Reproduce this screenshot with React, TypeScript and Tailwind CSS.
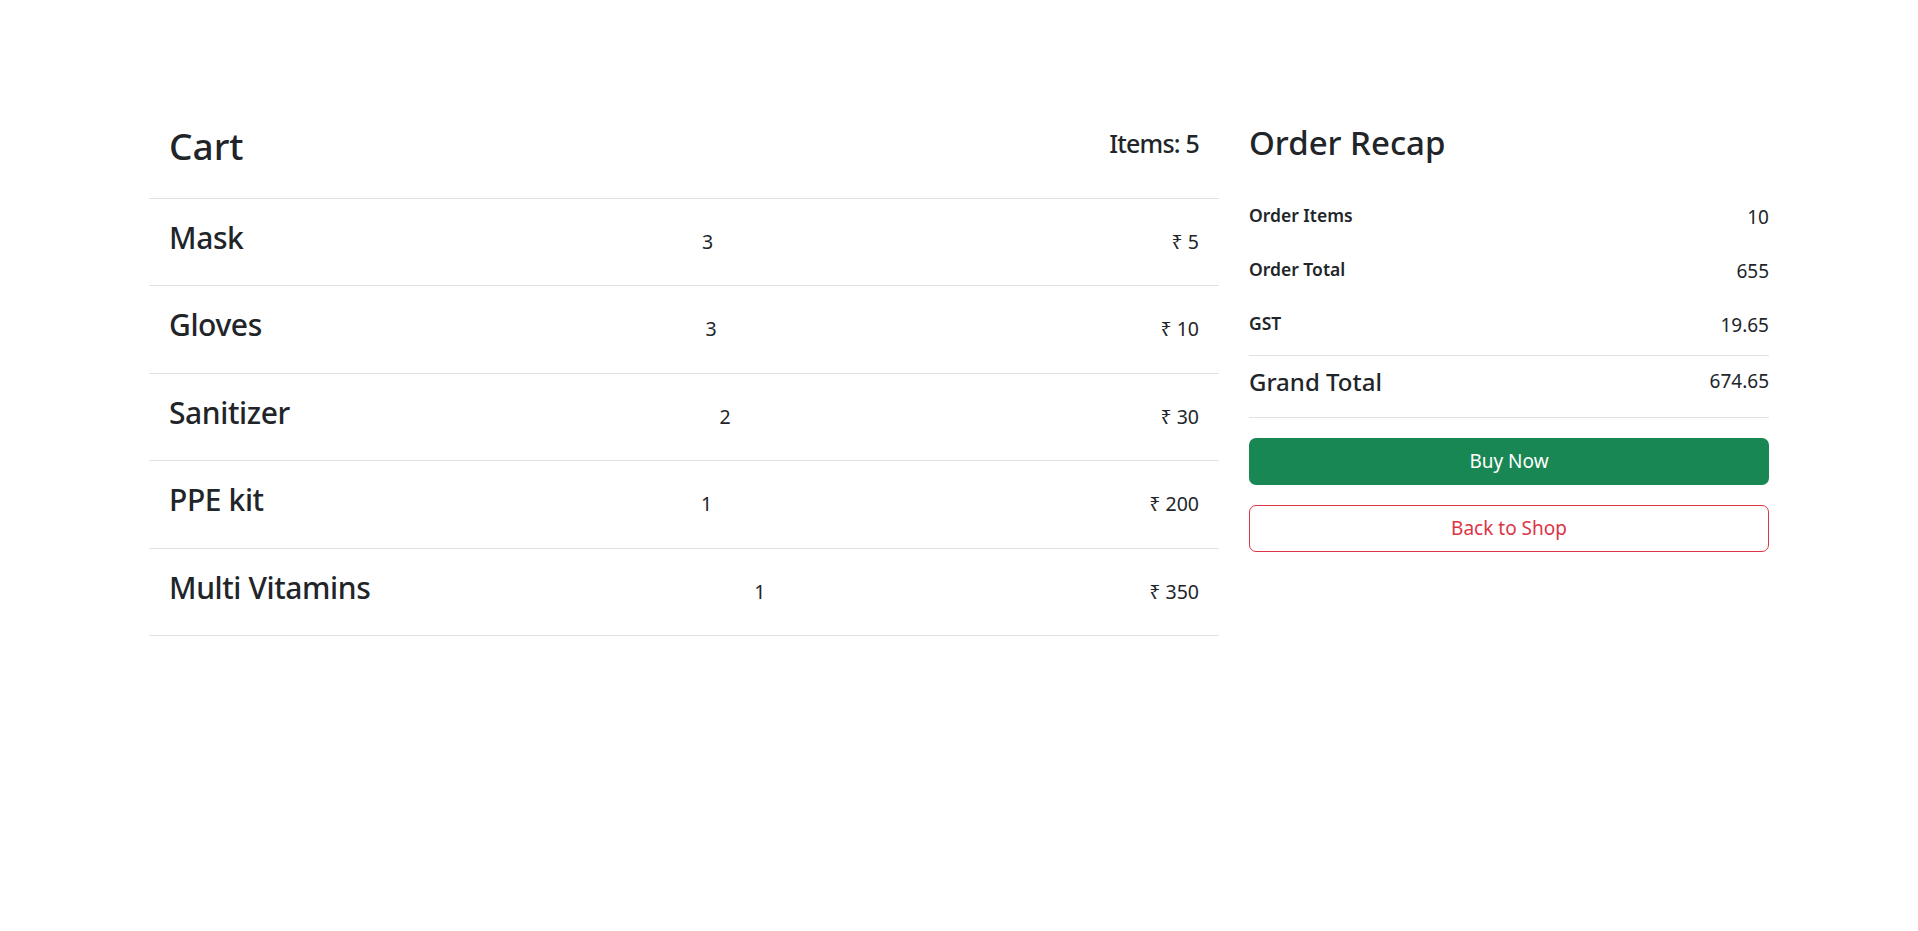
import React from "react";

type Item = {
  name: string;
  qty: number;
  price: number;
};

const items: Item[] = [
  { name: "Mask", qty: 3, price: 5 },
  { name: "Gloves", qty: 3, price: 10 },
  { name: "Sanitizer", qty: 2, price: 30 },
  { name: "PPE kit", qty: 1, price: 200 },
  { name: "Multi Vitamins", qty: 1, price: 350 },
];

const recap = [
  { label: "Order Items", value: "10" },
  { label: "Order Total", value: "655" },
  { label: "GST", value: "19.65" },
];

const CartRow: React.FC<{ item: Item }> = ({ item }) => (
  <div className="flex h-[87.4px] items-baseline justify-between border-b border-[#dee2e6] px-5 pt-[24px]">
    <h3 className="text-[30px] font-medium leading-none tracking-[-0.4px]">{item.name}</h3>
    <span className="text-[19.5px] leading-none">{item.qty}</span>
    <span className="text-[19.5px] leading-none">₹ {item.price}</span>
  </div>
);

export default function App() {
  return (
    <div className="min-h-screen bg-white font-['Noto_Sans','Open_Sans',sans-serif] text-[#212529]">
      <div className="mx-auto flex w-[1620px] items-start gap-[30px] pt-[100px]">
        {/* cart list */}
        <div className="w-[1070px]">
          <div className="flex h-[99px] items-start justify-between border-b border-[#dee2e6] px-5">
            <h1 className="mt-[27px] text-[37px] font-medium leading-none">Cart</h1>
            <h5 className="mt-[31px] text-[25px] font-medium leading-none tracking-[-0.8px]">Items: 5</h5>
          </div>
          {items.map((item) => (
            <CartRow key={item.name} item={item} />
          ))}
        </div>

        {/* order recap */}
        <div className="w-[520px]">
          <h2 className="mt-[26px] text-[33px] font-medium leading-none">Order Recap</h2>
          <div className="mt-[48px] flex flex-col gap-[35px]">
            {recap.map((r) => (
              <div key={r.label} className="flex h-[19px] items-start justify-between">
                <span className="text-[17.5px] font-semibold leading-none">{r.label}</span>
                <span className="mt-[1px] text-[19px] leading-none">{r.value}</span>
              </div>
            ))}
          </div>
          <div className="mt-[21px] flex h-[63px] items-center justify-between border-y border-[#dee2e6] pb-[10px]">
            <span className="text-[24px] font-medium leading-none">Grand Total</span>
            <span className="text-[19px] leading-none">674.65</span>
          </div>
          <button className="mt-[20px] flex h-[47px] w-full items-center justify-center rounded-[7px] bg-[#198754] text-[19px] text-white">
            Buy Now
          </button>
          <button className="mt-[20px] flex h-[47px] w-full items-center justify-center rounded-[7px] border border-[#dc3545] bg-white text-[19px] text-[#dc3545]">
            Back to Shop
          </button>
        </div>
      </div>
    </div>
  );
}
